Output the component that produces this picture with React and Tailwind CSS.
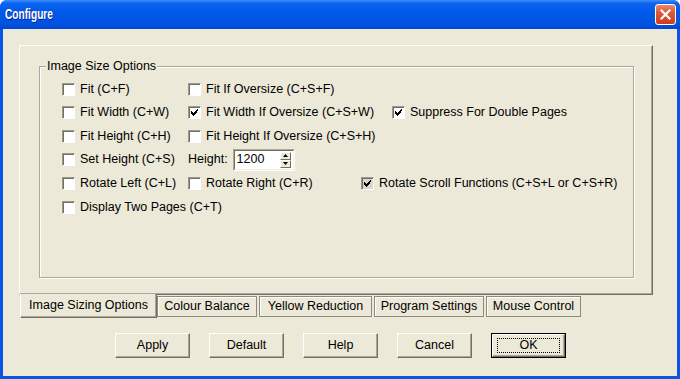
import React from 'react';

const rows = [
  { h: 'h-[23px]', items: [{ label: 'Fit (C+F)' }, { label: 'Fit If Oversize (C+S+F)' }] },
  {
    h: 'h-[23px]',
    items: [
      { label: 'Fit Width (C+W)' },
      { label: 'Fit Width If Oversize (C+S+W)', checked: true, w: 'w-[204px]' },
      { label: 'Suppress For Double Pages', checked: true },
    ],
  },
  { h: 'h-[24px]', items: [{ label: 'Fit Height (C+H)' }, { label: 'Fit Height If Oversize (C+S+H)' }] },
];

const tabs = [
  { name: 'Colour Balance', w: 'w-[100px]' },
  { name: 'Yellow Reduction', w: 'w-[113px]' },
  { name: 'Program Settings', w: 'w-[110px]' },
  { name: 'Mouse Control', w: 'w-[95px]' },
];

const buttons = ['Apply', 'Default', 'Help', 'Cancel'];

function CheckMark() {
  return (
    <svg width="7" height="7" viewBox="0 0 7 7" shapeRendering="crispEdges">
      <path
        d="M6 0h1v2h-1zM5 1h1v3h-1zM4 2h1v3h-1zM3 3h1v3h-1zM2 4h1v3h-1zM1 3h1v3h-1zM0 2h1v3h-1z"
        fill="#000"
      />
    </svg>
  );
}

function Box({ checked, dim }) {
  return (
    <span
      className={
        'flex h-[13px] w-[13px] shrink-0 items-center justify-center border border-t-[#9d9a8c] border-l-[#9d9a8c] border-r-white border-b-white shadow-[inset_1px_1px_0_#716f64] ' +
        (dim ? 'bg-[#dcd9cc]' : 'bg-white')
      }
    >
      {checked && <CheckMark />}
    </span>
  );
}

function Option({ label, checked, dim, w = 'w-[126px]' }) {
  return (
    <div className={`flex items-center gap-[5px] ${w}`}>
      <Box checked={checked} dim={dim} />
      <span className="whitespace-nowrap">{label}</span>
    </div>
  );
}

function Button({ children, focus }) {
  if (focus) {
    return (
      <div className="h-[25px] w-[75px] border border-black">
        <div className="flex h-full w-full items-center justify-center border border-t-white border-l-white border-r-[#716f64] border-b-[#716f64] shadow-[inset_-1px_-1px_0_#aca899]">
          <div className="flex h-[15px] w-[63px] items-center justify-center border border-dotted border-black">
            {children}
          </div>
        </div>
      </div>
    );
  }
  return (
    <div className="flex h-[25px] w-[75px] items-center justify-center border border-t-white border-l-white border-r-[#716f64] border-b-[#716f64] shadow-[inset_-1px_-1px_0_#aca899]">
      {children}
    </div>
  );
}

export default function App() {
  return (
    <div className="h-[379px] w-[680px] bg-white font-['Liberation_Sans',Arial,sans-serif] text-[12.5px] text-black">
      <div className="flex h-full w-full flex-col overflow-hidden rounded-t-[7px] bg-[#0a55e4]">
        {/* title bar */}
        <div className="flex h-[29px] shrink-0 items-center justify-between bg-[linear-gradient(to_bottom,#3c8ef9_0%,#0b63f0_12%,#0058ea_45%,#0053e2_80%,#0046d2_100%)] pl-[5px] pr-[4px]">
          <span className="origin-left scale-x-[0.7] text-[14.5px] font-bold text-white [text-shadow:1px_1px_0_#0a1a8a]">
            Configure
          </span>
          <div className="flex h-[21px] w-[21px] items-center justify-center rounded-[3px] border border-white bg-[linear-gradient(to_bottom,#e9876c_0%,#e0573a_40%,#cc3e1d_100%)]">
            <svg width="11" height="11" viewBox="0 0 11 11">
              <path d="M1.5 1.5l8 8M9.5 1.5l-8 8" stroke="#fff" strokeWidth="2.2" strokeLinecap="square" />
            </svg>
          </div>
        </div>

        {/* client */}
        <div className="mx-[3px] mb-[3px] flex-1 bg-[#ece9d8]">
          <div className="ml-[16px] mt-[16px] h-[250px] w-[634px] border border-t-white border-l-white border-r-[#716f64] border-b-[#716f64] shadow-[inset_-1px_-1px_0_#aca899]">
            <div className="relative ml-[19px] mt-[20px] h-[212px] w-[595px] border border-[#aca899] shadow-[inset_1px_1px_0_white,1px_1px_0_white]">
              <span className="absolute -top-[8px] left-[6px] bg-[#ece9d8] px-[1px] leading-[14px]">
                Image Size Options
              </span>
              <div className="flex flex-col pl-[22px] pt-[11px]">
                {rows.map((r, i) => (
                  <div key={i} className={`flex items-center ${r.h}`}>
                    {r.items.map((it) => (
                      <Option key={it.label} {...it} />
                    ))}
                  </div>
                ))}
                <div className="flex h-[23px] items-center">
                  <Option label="Set Height (C+S)" />
                  <span>Height:</span>
                  <div className="ml-[5px] flex h-[22px] w-[62px] items-center border border-t-[#aca899] border-l-[#aca899] border-r-white border-b-white">
                    <div className="flex h-full flex-1 items-center justify-between border border-t-[#716f64] border-l-[#716f64] border-r-[#f1efe2] border-b-[#f1efe2] bg-white pl-[2px] pr-[2px]">
                      <span>1200</span>
                      <div className="flex flex-col">
                        <div className="flex h-[8px] w-[11px] items-center justify-center border border-t-white border-l-white border-r-[#716f64] border-b-[#716f64] bg-[#ece9d8]">
                          <svg width="5" height="3" viewBox="0 0 5 3"><path d="M2.5 0L5 3H0z" fill="#000" /></svg>
                        </div>
                        <div className="flex h-[8px] w-[11px] items-center justify-center border border-t-white border-l-white border-r-[#716f64] border-b-[#716f64] bg-[#ece9d8]">
                          <svg width="5" height="3" viewBox="0 0 5 3"><path d="M0 0h5L2.5 3z" fill="#000" /></svg>
                        </div>
                      </div>
                    </div>
                  </div>
                </div>
                <div className="flex h-[24px] items-center">
                  <Option label="Rotate Left (C+L)" />
                  <Option label="Rotate Right (C+R)" w="w-[173px]" />
                  <Option label="Rotate Scroll Functions (C+S+L or C+S+R)" checked dim w="w-auto" />
                </div>
                <div className="flex h-[24px] items-center">
                  <Option label="Display Two Pages (C+T)" w="w-auto" />
                </div>
              </div>
            </div>
          </div>

          {/* tabs */}
          <div className="-mt-[1px] ml-[17px] flex items-start">
            <div className="flex h-[24px] w-[137px] items-center justify-center border-x border-b border-l-white border-r-[#716f64] border-b-[#716f64] bg-[#ece9d8] shadow-[inset_-1px_-1px_0_#aca899]">
              Image Sizing Options
            </div>
            <div className="mt-[2px] flex gap-[2px]">
              {tabs.map((t) => (
                <div
                  key={t.name}
                  className={`flex h-[21px] items-center justify-center border border-[#8c8a7c] shadow-[inset_1px_1px_0_white] ${t.w}`}
                >
                  {t.name}
                </div>
              ))}
            </div>
          </div>

          {/* buttons */}
          <div className="ml-[112px] mt-[15px] flex gap-[19px]">
            {buttons.map((b) => (
              <Button key={b}>{b}</Button>
            ))}
            <Button focus>OK</Button>
          </div>
        </div>
      </div>
    </div>
  );
}
